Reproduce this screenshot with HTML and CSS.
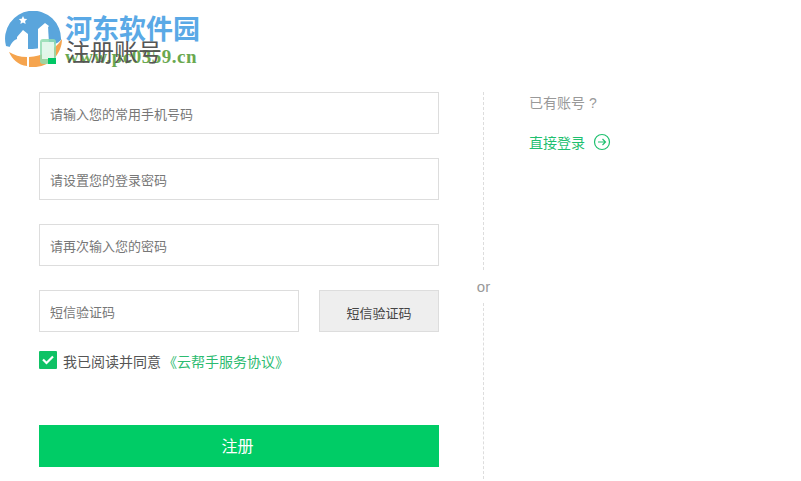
FILE: index.html
```html
<!DOCTYPE html>
<html lang="en">
<head>
    <meta charset="UTF-8">
    <title>注册账号</title>
    <link rel="stylesheet" href="styles.css">
</head>
<body>

<div class="watermark">
    <svg class="wm-logo" width="58" height="56" viewBox="0 0 58 56">
        <path d="M2 35 A28 28 0 1 1 57 29 C50 36 36 38 24 38 C15 38 8 38 6 36 Z" fill="#5aa5dc"/>
        <path d="M5 38 C7 31 11 28 16 27 L16 38 Z" fill="#fff"/>
        <path d="M13 26 L19 19 L24 23 L24 38 L13 38 Z" fill="#fff"/>
        <path d="M34 18 L41 12 L45 15 L45 33 L50 31 L50 38 L34 38 Z" fill="#fff"/>
        <path d="M44 15 C47 18 50 24 49 31 L45 33 Z" fill="#5aa5dc"/>
        <path d="M5 41 C10 44 16 46 23 46 L23 55 C14 54 8 48 5 41 Z" fill="#f5a44e"/>
        <path d="M25 46 C38 45 50 40 58 28 C58 44 44 58 25 56 Z" fill="#f5a44e"/>
        <path d="M19 5 l1.300 2.700 2.900 .4 -2.100 2 .5 2.900 -2.600-1.400 -2.600 1.400 .5-2.900 -2.100-2 2.900-.4 Z" fill="#fff"/>
    </svg>
    <div class="wm-text">
        <div class="wm-name">河东软件园</div>
        <div class="wm-url">www.pc0359.cn</div>
    </div>
</div>

<div class="page">
    <div class="register">
        <h2 class="title">
            <svg class="title-icon" width="16" height="25" viewBox="0 0 16 25">
                <rect x="0" y="0" width="16" height="25" rx="3" fill="#8fdcb0" fill-opacity="0.85"/>
                <rect x="2" y="3" width="12" height="17" fill="#e9f9f0" fill-opacity="0.9"/>
                <path d="M8 25 L8 19 L16 19 L16 25 Z" fill="#00c765"/>
            </svg>
            注册账号
        </h2>
        <input class="field" type="text" placeholder="请输入您的常用手机号码">
        <input class="field" type="text" placeholder="请设置您的登录密码">
        <input class="field" type="text" placeholder="请再次输入您的密码">
        <div class="code-row">
            <input class="field code-input" type="text" placeholder="短信验证码">
            <button class="code-btn">短信验证码</button>
        </div>
        <div class="agree">
            <span class="check">
                <svg width="12" height="10" viewBox="0 0 12 10"><path d="M1 4.500 L4.500 8 L11 1.500" fill="none" stroke="#fff" stroke-width="2.200"/></svg>
            </span>
            <span class="agree-text">我已阅读并同意<a class="link" href="#">《云帮手服务协议》</a></span>
        </div>
        <button class="submit">注册</button>
    </div>

    <div class="divider">
        <div class="dash"></div>
        <div class="or">or</div>
        <div class="dash dash-bottom"></div>
    </div>

    <div class="side">
        <div class="side-text">已有账号 ?</div>
        <a class="side-link" href="#">
            直接登录
            <svg width="18" height="18" viewBox="0 0 18 18"><circle cx="9" cy="9" r="7.500" fill="none" stroke="#1fc06f" stroke-width="1.200"/><path d="M5 9 H12.500 M9.500 6 L12.500 9 L9.500 12" fill="none" stroke="#1fc06f" stroke-width="1.200"/></svg>
        </a>
    </div>
</div>

</body>
</html>
```

FILE: styles.css
```css
body {
    margin: 0;
    height: 481px;
    overflow: hidden;
    background-color: #fff;
    font-family: "Liberation Sans", "Noto Sans CJK SC", sans-serif;
    font-size: 14px;
    color: #666;
}
.page {
    display: flex;
    padding: 38px 0 0 39px;
}
.register {
    width: 400px;
}
.title {
    display: flex;
    align-items: center;
    gap: 10px;
    height: 24px;
    margin: 0 0 30px;
    font-size: 24px;
    font-weight: normal;
    color: #555;
}
.title-icon {
    flex: none;
    margin: 2px 0 0 1px;
}
.field {
    display: block;
    box-sizing: border-box;
    width: 100%;
    height: 42px;
    margin-bottom: 24px;
    padding: 2px 10px 0;
    border: 1px solid #ddd;
    font-family: inherit;
    font-size: 13px;
}
.field::placeholder {
    color: #777;
    opacity: 1;
}
.code-row {
    display: flex;
    justify-content: space-between;
}
.code-input {
    width: 260px;
    margin-bottom: 0;
}
.code-btn {
    width: 120px;
    height: 42px;
    padding: 2px 0 0;
    background-color: #eee;
    border: 1px solid #ddd;
    font-family: inherit;
    font-size: 13px;
    color: #444;
}
.agree {
    display: flex;
    align-items: center;
    gap: 6px;
    height: 18px;
    margin-top: 19px;
    color: #555;
}
.agree-text {
    padding-top: 2px;
}
.check {
    display: flex;
    justify-content: center;
    align-items: center;
    width: 18px;
    height: 18px;
    background-color: #0fc265;
    border-radius: 1px;
}
.link {
    margin-left: 2px;
    color: #2dbb70;
    text-decoration: none;
}
.submit {
    display: block;
    width: 100%;
    height: 42px;
    margin-top: 56px;
    padding: 0 3px 2px 0;
    background-color: #00cc66;
    border: none;
    font-family: inherit;
    font-size: 16px;
    color: #fff;
}
.divider {
    display: flex;
    flex-direction: column;
    align-items: center;
    width: 89px;
    height: 387px;
    margin-top: 54px;
}
.dash {
    flex: none;
    height: 178px;
    border-left: 1px dashed #ddd;
}
.dash-bottom {
    height: 176px;
}
.or {
    height: 33px;
    line-height: 33px;
    font-size: 15px;
    color: #999;
}
.side {
    padding: 55px 0 0 1px;
}
.side-text {
    height: 20px;
    line-height: 20px;
    color: #999;
}
.side-link {
    display: flex;
    align-items: center;
    gap: 8px;
    margin-top: 19px;
    color: #1fc06f;
    text-decoration: none;
}
/* site watermark sits behind the page content */
.watermark {
    position: absolute;
    z-index: -1;
    left: 4px;
    top: 11px;
    display: flex;
    gap: 3px;
}
.wm-text {
    padding-top: 2px;
    font-family: "Liberation Serif", "Noto Sans CJK SC", serif;
    font-weight: bold;
}
.wm-name {
    font-size: 27px;
    line-height: 35px;
    color: #5aa9e6;
}
.wm-url {
    font-size: 19px;
    line-height: 18px;
    letter-spacing: 0.5px;
    color: #6aa84f;
}
```
